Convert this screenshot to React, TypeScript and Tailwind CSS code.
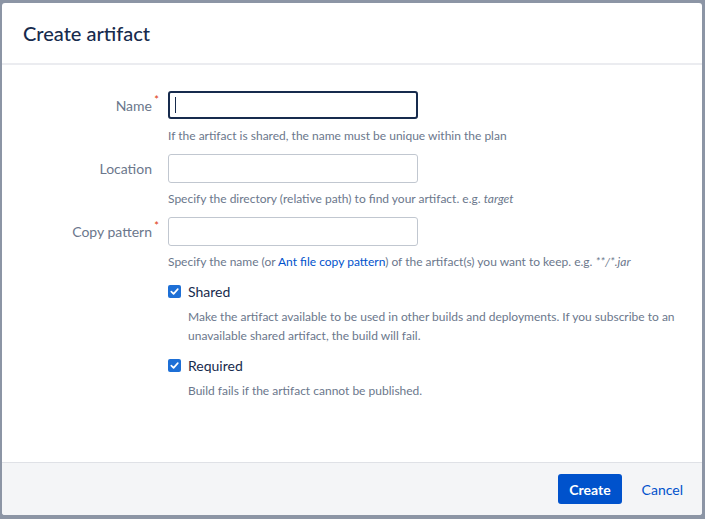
import React from 'react';

const FONT = { fontFamily: 'Lato, "Noto Sans", sans-serif' };

const Req = () => (
  <span className="absolute -right-[7px] top-[-3px] text-[11px] text-[#de350b]">*</span>
);

const Check = ({ label }: { label: string }) => (
  <label className="flex h-[20px] items-center gap-[7px]">
    <span className="flex h-[13px] w-[13px] items-center justify-center rounded-[2px] bg-[#1d6fd6]">
      <svg viewBox="0 0 12 12" className="h-[11px] w-[11px]">
        <path d="M2.5 6.2 L5 8.6 L9.6 3.4" fill="none" stroke="#fff" strokeWidth="1.8" strokeLinecap="round" strokeLinejoin="round" />
      </svg>
    </span>
    <span className="text-[14px] text-[#172b4d]">{label}</span>
  </label>
);

export default function App() {
  return (
    <div className="flex h-[519px] w-full bg-[#8c95a5] pt-[3px] pb-[4px] pl-[2px] pr-[3px]" style={FONT}>
      <div className="flex flex-1 flex-col overflow-hidden rounded-[3px] bg-white">
        <div className="flex h-[62px] items-center border-b-2 border-[#ebecf0] px-[21px]">
          <h1 className="text-[20px] font-medium text-[#172b4d]">Create artifact</h1>
        </div>

        <div className="flex-1 pt-[26px]">
          <div className="grid grid-cols-[150px_1fr] gap-x-[16px]">
            <div className="flex h-[28px] items-center justify-end text-[14px] text-[#6b778c]">
              <span className="relative">Name<Req /></span>
            </div>
            <div>
              <div className="h-[28px] w-[250px] rounded-[3px] border-2 border-[#172b4d] bg-white px-[5px] flex items-center">
                <span className="h-[16px] w-px bg-[#172b4d]" />
              </div>
              <p className="mt-[8px] mb-[9px] text-[12px] leading-[18px] text-[#6b778c]">
                If the artifact is shared, the name must be unique within the plan
              </p>
            </div>

            <div className="flex h-[28px] items-center justify-end text-[14px] text-[#6b778c]">
              <span className="relative">Location</span>
            </div>
            <div>
              <div className="h-[29px] w-[250px] rounded-[3px] border border-[#c1c7d0] bg-white" />
              <p className="mt-[7px] mb-[9px] text-[12px] leading-[18px] text-[#6b778c]">
                Specify the directory (relative path) to find your artifact. e.g. <em>target</em>
              </p>
            </div>

            <div className="flex h-[28px] items-center justify-end text-[14px] text-[#6b778c]">
              <span className="relative">Copy pattern<Req /></span>
            </div>
            <div>
              <div className="h-[29px] w-[250px] rounded-[3px] border border-[#c1c7d0] bg-white" />
              <p className="mt-[7px] text-[12px] leading-[18px] text-[#6b778c]">
                Specify the name (or <span className="text-[#0052cc]">Ant file copy pattern</span>) of the artifact(s) you want to keep. e.g. <em>**/*.jar</em>
              </p>
            </div>

            <div />
            <div className="mt-[10px]">
              <Check label="Shared" />
              <p className="mt-[6px] pl-[20px] pr-[18px] text-[12px] leading-[19px] text-[#6b778c]">
                Make the artifact available to be used in other builds and deployments. If you subscribe to an unavailable shared artifact, the build will fail.
              </p>
              <div className="mt-[10px]">
                <Check label="Required" />
              </div>
              <p className="mt-[6px] pl-[20px] text-[12px] leading-[19px] text-[#6b778c]">
                Build fails if the artifact cannot be published.
              </p>
            </div>
          </div>
        </div>

        <div className="flex h-[53px] items-center justify-end gap-[10px] border-t border-[#dfe1e6] bg-[#f4f5f7] pr-[9px]">
          <button className="h-[30px] rounded-[3px] bg-[#0052cc] px-[11px] text-[14px] font-bold text-white">
            Create
          </button>
          <button className="h-[30px] px-[10px] text-[14px] text-[#0052cc]">Cancel</button>
        </div>
      </div>
    </div>
  );
}
